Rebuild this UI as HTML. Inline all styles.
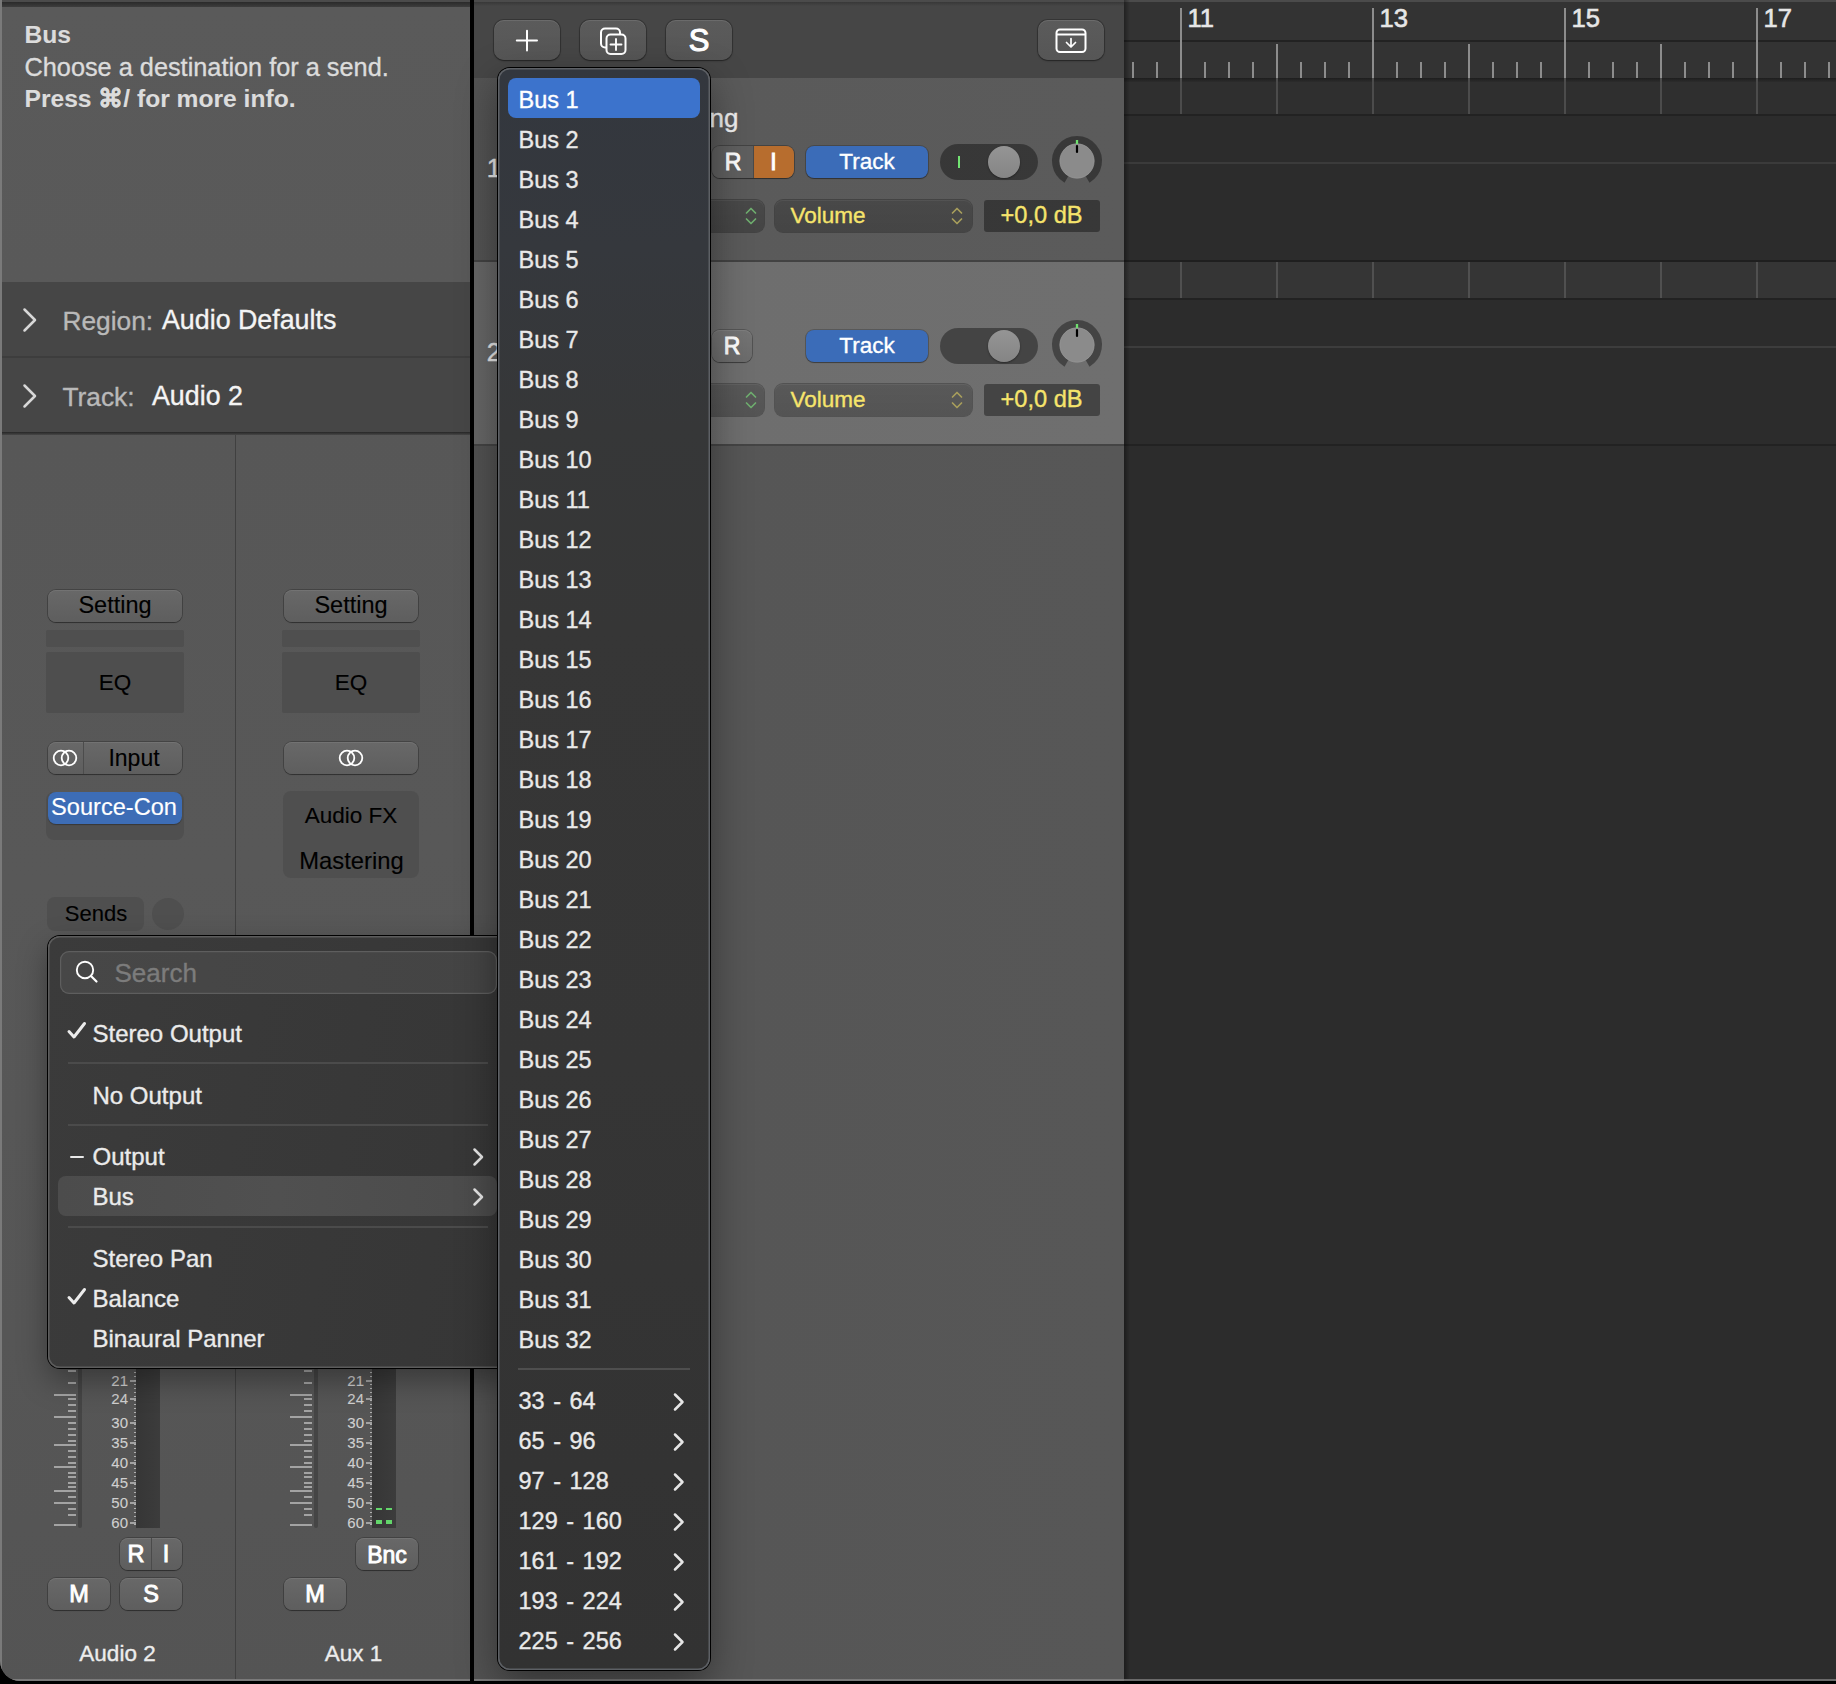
<!DOCTYPE html>
<html><head><meta charset="utf-8">
<style>
*{box-sizing:border-box;margin:0;padding:0}
html,body{width:1836px;height:1684px;overflow:hidden;background:#000;font-family:"Liberation Sans",sans-serif}
.a{position:absolute}
.t{position:absolute;white-space:pre;line-height:1;-webkit-text-stroke:0.35px currentColor}
.btn{position:absolute;border-radius:8px;background:linear-gradient(#686868,#5e5e5e);box-shadow:inset 0 1px 0 rgba(255,255,255,.08),0 0 0 1px rgba(0,0,0,.22),0 1px 1px rgba(0,0,0,.3)}
.tbtn{position:absolute;border-radius:10px;background:linear-gradient(#5b5b5b,#565656);box-shadow:inset 0 1px 0 rgba(255,255,255,.10),0 0 0 1px rgba(0,0,0,.22),0 1px 2px rgba(0,0,0,.35)}
svg{position:absolute;overflow:visible}
</style></head><body>
<div class="a" id="win" style="left:0;top:0;width:1836px;height:1681px;background:#2c2c2c;border-bottom-left-radius:20px;overflow:hidden">

<div class="a" style="left:0;top:0;width:470px;height:1681px;background:#585858;overflow:hidden;border-bottom-left-radius:20px">
<div class="a" style="left:0px;top:0px;width:470px;height:2px;background:#4b4b4b"></div>
<div class="a" style="left:0px;top:2px;width:470px;height:5px;background:linear-gradient(#2a2a2a,#3d3d3d)"></div>
<div class="a" style="left:0px;top:7px;width:470px;height:275px;background:linear-gradient(#5a5a5a,#595959)"></div>
<div class="t" style="left:24.5px;top:23.18px;font-size:24.6px;font-weight:700;color:#dcdcdc;-webkit-text-stroke:0.1px currentColor">Bus</div>
<div class="t" style="left:24.5px;top:54.88px;font-size:25.3px;color:#dcdcdc">Choose a destination for a send.</div>
<div class="t" style="left:24.5px;top:87.48px;font-size:24.6px;font-weight:700;color:#dcdcdc;-webkit-text-stroke:0.1px currentColor">Press ⌘/ for more info.</div>
<div class="a" style="left:0px;top:282px;width:470px;height:74px;background:#464646"></div>
<div class="a" style="left:0px;top:356px;width:470px;height:2px;background:#3d3d3d"></div>
<div class="a" style="left:0px;top:358px;width:470px;height:74px;background:#464646"></div>
<div class="a" style="left:0px;top:432px;width:470px;height:3px;background:linear-gradient(#262626,#474747)"></div>
<svg style="left:0;top:282px" width="60" height="74"><path d="M24.5 27.5 L35 38 L24.5 48.5" fill="none" stroke="#d8d8d8" stroke-width="2.5" stroke-linecap="round" stroke-linejoin="round"/></svg>
<div class="t" style="left:62.5px;top:307.74px;font-size:26.3px;color:#b9b9b9">Region:</div>
<div class="t" style="left:162px;top:307.31px;font-size:26.8px;color:#f4f4f4">Audio Defaults</div>
<svg style="left:0;top:358px" width="60" height="74"><path d="M24.5 27.5 L35 38 L24.5 48.5" fill="none" stroke="#d8d8d8" stroke-width="2.5" stroke-linecap="round" stroke-linejoin="round"/></svg>
<div class="t" style="left:62.5px;top:383.74px;font-size:26.3px;color:#b9b9b9">Track:</div>
<div class="t" style="left:152px;top:383.31px;font-size:26.8px;color:#f4f4f4">Audio 2</div>
<div class="a" style="left:0px;top:435px;width:470px;height:1246px;background:linear-gradient(175deg,#575757,#585858 35%,#565656 70%,#545454)"></div>
<div class="a" style="left:234.5px;top:435px;width:1.2px;height:1246px;background:#404040"></div>
<div class="btn" style="left:48px;top:590px;width:134px;height:32px"></div>
<div class="t" style="left:48.00px;width:134px;text-align:center;top:593.81px;font-size:23.5px;color:#000;-webkit-text-stroke:0.12px #000">Setting</div>
<div class="a" style="left:46px;top:630px;width:138px;height:17px;background:#4f4f4f;border-radius:2px"></div>
<div class="a" style="left:46px;top:652px;width:138px;height:61px;background:#4e4e4e;border-radius:2px"></div>
<div class="t" style="left:48.00px;width:134px;text-align:center;top:671.95px;font-size:22.5px;color:#000;-webkit-text-stroke:0.12px #000">EQ</div>
<div class="btn" style="left:48px;top:742px;width:134px;height:32px"></div>
<div class="a" style="left:83px;top:742px;width:1px;height:32px;background:#4c4c4c"></div>
<svg style="left:50px;top:743px" width="30" height="30"><circle cx="11" cy="15" r="7.3" fill="none" stroke="#fff" stroke-width="1.8"/><circle cx="19" cy="15" r="7.3" fill="none" stroke="#fff" stroke-width="1.8"/></svg>
<div class="t" style="left:84.00px;width:100px;text-align:center;top:746.53px;font-size:23px;color:#000;-webkit-text-stroke:0.12px #000">Input</div>
<div class="a" style="left:46px;top:792px;width:138px;height:48px;background:#4f4f4f;border-radius:8px"></div>
<div class="a" style="left:48px;top:792px;width:134px;height:32px;border-radius:8px;background:#3d6db6;box-shadow:0 1px 1px rgba(0,0,0,.3)"></div>
<div class="t" style="left:47.00px;width:134px;text-align:center;top:795.82px;font-size:23.6px;color:#fff;-webkit-text-stroke:0.15px #fff">Source-Con</div>
<div class="a" style="left:47px;top:897px;width:97px;height:34px;background:#4f4f4f;border-radius:8px"></div>
<div class="t" style="left:47.50px;width:97px;text-align:center;top:902.98px;font-size:22px;color:#000;-webkit-text-stroke:0.12px #000">Sends</div>
<div class="a" style="left:152px;top:898px;width:32px;height:32px;border-radius:50%;background:#4f4f4f"></div>
<div class="a" style="left:54px;top:1394.25px;width:22px;height:1.6px;background:#a3a3a3"></div>
<div class="a" style="left:54px;top:1416.25px;width:22px;height:1.6px;background:#a3a3a3"></div>
<div class="a" style="left:54px;top:1444.25px;width:22px;height:1.6px;background:#a3a3a3"></div>
<div class="a" style="left:54px;top:1466.25px;width:22px;height:1.6px;background:#a3a3a3"></div>
<div class="a" style="left:54px;top:1490.25px;width:22px;height:1.6px;background:#a3a3a3"></div>
<div class="a" style="left:54px;top:1502.25px;width:22px;height:1.6px;background:#a3a3a3"></div>
<div class="a" style="left:54px;top:1524.25px;width:22px;height:1.6px;background:#a3a3a3"></div>
<div class="a" style="left:68px;top:1370.25px;width:8px;height:1.6px;background:#a3a3a3"></div>
<div class="a" style="left:68px;top:1382.25px;width:8px;height:1.6px;background:#a3a3a3"></div>
<div class="a" style="left:68px;top:1398.25px;width:8px;height:1.6px;background:#a3a3a3"></div>
<div class="a" style="left:68px;top:1404.25px;width:8px;height:1.6px;background:#a3a3a3"></div>
<div class="a" style="left:68px;top:1410.25px;width:8px;height:1.6px;background:#a3a3a3"></div>
<div class="a" style="left:68px;top:1422.25px;width:8px;height:1.6px;background:#a3a3a3"></div>
<div class="a" style="left:68px;top:1428.25px;width:8px;height:1.6px;background:#a3a3a3"></div>
<div class="a" style="left:68px;top:1434.25px;width:8px;height:1.6px;background:#a3a3a3"></div>
<div class="a" style="left:68px;top:1440.25px;width:8px;height:1.6px;background:#a3a3a3"></div>
<div class="a" style="left:68px;top:1450.25px;width:8px;height:1.6px;background:#a3a3a3"></div>
<div class="a" style="left:68px;top:1456.25px;width:8px;height:1.6px;background:#a3a3a3"></div>
<div class="a" style="left:68px;top:1462.25px;width:8px;height:1.6px;background:#a3a3a3"></div>
<div class="a" style="left:68px;top:1472.25px;width:8px;height:1.6px;background:#a3a3a3"></div>
<div class="a" style="left:68px;top:1476.25px;width:8px;height:1.6px;background:#a3a3a3"></div>
<div class="a" style="left:68px;top:1482.25px;width:8px;height:1.6px;background:#a3a3a3"></div>
<div class="a" style="left:68px;top:1486.25px;width:8px;height:1.6px;background:#a3a3a3"></div>
<div class="a" style="left:68px;top:1496.25px;width:8px;height:1.6px;background:#a3a3a3"></div>
<div class="a" style="left:68px;top:1508.25px;width:8px;height:1.6px;background:#a3a3a3"></div>
<div class="a" style="left:68px;top:1514.25px;width:8px;height:1.6px;background:#a3a3a3"></div>
<div class="a" style="left:78px;top:1368px;width:4px;height:160px;background:#454545;border-radius:2px"></div>
<div class="t" style="left:88.00px;width:40px;text-align:right;top:1372.70px;font-size:15px;color:#d0d0d0;-webkit-text-stroke:0.1px currentColor">21</div>
<div class="a" style="left:130px;top:1380.25px;width:6px;height:1.6px;background:#a3a3a3"></div>
<div class="t" style="left:88.00px;width:40px;text-align:right;top:1390.70px;font-size:15px;color:#d0d0d0;-webkit-text-stroke:0.1px currentColor">24</div>
<div class="a" style="left:130px;top:1398.25px;width:6px;height:1.6px;background:#a3a3a3"></div>
<div class="t" style="left:88.00px;width:40px;text-align:right;top:1414.70px;font-size:15px;color:#d0d0d0;-webkit-text-stroke:0.1px currentColor">30</div>
<div class="a" style="left:130px;top:1422.25px;width:6px;height:1.6px;background:#a3a3a3"></div>
<div class="t" style="left:88.00px;width:40px;text-align:right;top:1434.70px;font-size:15px;color:#d0d0d0;-webkit-text-stroke:0.1px currentColor">35</div>
<div class="a" style="left:130px;top:1442.25px;width:6px;height:1.6px;background:#a3a3a3"></div>
<div class="t" style="left:88.00px;width:40px;text-align:right;top:1454.70px;font-size:15px;color:#d0d0d0;-webkit-text-stroke:0.1px currentColor">40</div>
<div class="a" style="left:130px;top:1462.25px;width:6px;height:1.6px;background:#a3a3a3"></div>
<div class="t" style="left:88.00px;width:40px;text-align:right;top:1474.70px;font-size:15px;color:#d0d0d0;-webkit-text-stroke:0.1px currentColor">45</div>
<div class="a" style="left:130px;top:1482.25px;width:6px;height:1.6px;background:#a3a3a3"></div>
<div class="t" style="left:88.00px;width:40px;text-align:right;top:1494.70px;font-size:15px;color:#d0d0d0;-webkit-text-stroke:0.1px currentColor">50</div>
<div class="a" style="left:130px;top:1502.25px;width:6px;height:1.6px;background:#a3a3a3"></div>
<div class="t" style="left:88.00px;width:40px;text-align:right;top:1514.70px;font-size:15px;color:#d0d0d0;-webkit-text-stroke:0.1px currentColor">60</div>
<div class="a" style="left:130px;top:1522.25px;width:6px;height:1.6px;background:#a3a3a3"></div>
<div class="a" style="left:134.3px;top:1368px;width:1.5px;height:160px;background:repeating-linear-gradient(#b0b0b0 0 1.5px,transparent 1.5px 4px)"></div>
<div class="a" style="left:136px;top:1368px;width:24px;height:160px;background:linear-gradient(90deg,#363636,#3a3a3a 70%,#3c3c3c)"></div>
<div class="btn" style="left:120px;top:1538px;width:62px;height:32px"></div>
<div class="a" style="left:151px;top:1538px;width:1px;height:32px;background:#4a4a4a"></div>
<div class="t" style="left:121.00px;width:30px;text-align:center;top:1543.11px;font-size:23.5px;color:#fff;-webkit-text-stroke:0.9px #fff">R</div>
<div class="t" style="left:151.00px;width:30px;text-align:center;top:1543.11px;font-size:23.5px;color:#fff;-webkit-text-stroke:0.9px #fff">I</div>
<div class="btn" style="left:48px;top:1578px;width:62px;height:32px"></div>
<div class="t" style="left:49.00px;width:60px;text-align:center;top:1583.11px;font-size:23.5px;color:#fff;-webkit-text-stroke:0.9px #fff">M</div>
<div class="btn" style="left:120px;top:1578px;width:62px;height:32px"></div>
<div class="t" style="left:121.00px;width:60px;text-align:center;top:1583.11px;font-size:23.5px;color:#fff;-webkit-text-stroke:0.9px #fff">S</div>
<div class="t" style="left:37.50px;width:160px;text-align:center;top:1643.35px;font-size:22.5px;color:#ececec">Audio 2</div>
<div class="btn" style="left:284px;top:590px;width:134px;height:32px"></div>
<div class="t" style="left:284.00px;width:134px;text-align:center;top:593.81px;font-size:23.5px;color:#000;-webkit-text-stroke:0.12px #000">Setting</div>
<div class="a" style="left:282px;top:630px;width:138px;height:17px;background:#4f4f4f;border-radius:2px"></div>
<div class="a" style="left:282px;top:652px;width:138px;height:61px;background:#4e4e4e;border-radius:2px"></div>
<div class="t" style="left:284.00px;width:134px;text-align:center;top:671.95px;font-size:22.5px;color:#000;-webkit-text-stroke:0.12px #000">EQ</div>
<div class="btn" style="left:284px;top:742px;width:134px;height:32px"></div>
<svg style="left:336px;top:743px" width="30" height="30"><circle cx="11" cy="15" r="7.3" fill="none" stroke="#fff" stroke-width="1.8"/><circle cx="19" cy="15" r="7.3" fill="none" stroke="#fff" stroke-width="1.8"/></svg>
<div class="a" style="left:283px;top:791px;width:136px;height:87px;background:#4f4f4f;border-radius:8px"></div>
<div class="t" style="left:283.00px;width:136px;text-align:center;top:804.95px;font-size:22.5px;color:#000;-webkit-text-stroke:0.12px #000">Audio FX</div>
<div class="t" style="left:283.50px;width:136px;text-align:center;top:848.85px;font-size:23.8px;color:#000;-webkit-text-stroke:0.12px #000">Mastering</div>
<div class="a" style="left:290px;top:1394.25px;width:22px;height:1.6px;background:#a3a3a3"></div>
<div class="a" style="left:290px;top:1416.25px;width:22px;height:1.6px;background:#a3a3a3"></div>
<div class="a" style="left:290px;top:1444.25px;width:22px;height:1.6px;background:#a3a3a3"></div>
<div class="a" style="left:290px;top:1466.25px;width:22px;height:1.6px;background:#a3a3a3"></div>
<div class="a" style="left:290px;top:1490.25px;width:22px;height:1.6px;background:#a3a3a3"></div>
<div class="a" style="left:290px;top:1502.25px;width:22px;height:1.6px;background:#a3a3a3"></div>
<div class="a" style="left:290px;top:1524.25px;width:22px;height:1.6px;background:#a3a3a3"></div>
<div class="a" style="left:304px;top:1370.25px;width:8px;height:1.6px;background:#a3a3a3"></div>
<div class="a" style="left:304px;top:1382.25px;width:8px;height:1.6px;background:#a3a3a3"></div>
<div class="a" style="left:304px;top:1398.25px;width:8px;height:1.6px;background:#a3a3a3"></div>
<div class="a" style="left:304px;top:1404.25px;width:8px;height:1.6px;background:#a3a3a3"></div>
<div class="a" style="left:304px;top:1410.25px;width:8px;height:1.6px;background:#a3a3a3"></div>
<div class="a" style="left:304px;top:1422.25px;width:8px;height:1.6px;background:#a3a3a3"></div>
<div class="a" style="left:304px;top:1428.25px;width:8px;height:1.6px;background:#a3a3a3"></div>
<div class="a" style="left:304px;top:1434.25px;width:8px;height:1.6px;background:#a3a3a3"></div>
<div class="a" style="left:304px;top:1440.25px;width:8px;height:1.6px;background:#a3a3a3"></div>
<div class="a" style="left:304px;top:1450.25px;width:8px;height:1.6px;background:#a3a3a3"></div>
<div class="a" style="left:304px;top:1456.25px;width:8px;height:1.6px;background:#a3a3a3"></div>
<div class="a" style="left:304px;top:1462.25px;width:8px;height:1.6px;background:#a3a3a3"></div>
<div class="a" style="left:304px;top:1472.25px;width:8px;height:1.6px;background:#a3a3a3"></div>
<div class="a" style="left:304px;top:1476.25px;width:8px;height:1.6px;background:#a3a3a3"></div>
<div class="a" style="left:304px;top:1482.25px;width:8px;height:1.6px;background:#a3a3a3"></div>
<div class="a" style="left:304px;top:1486.25px;width:8px;height:1.6px;background:#a3a3a3"></div>
<div class="a" style="left:304px;top:1496.25px;width:8px;height:1.6px;background:#a3a3a3"></div>
<div class="a" style="left:304px;top:1508.25px;width:8px;height:1.6px;background:#a3a3a3"></div>
<div class="a" style="left:304px;top:1514.25px;width:8px;height:1.6px;background:#a3a3a3"></div>
<div class="a" style="left:314px;top:1368px;width:4px;height:160px;background:#454545;border-radius:2px"></div>
<div class="t" style="left:324.00px;width:40px;text-align:right;top:1372.70px;font-size:15px;color:#d0d0d0;-webkit-text-stroke:0.1px currentColor">21</div>
<div class="a" style="left:366px;top:1380.25px;width:6px;height:1.6px;background:#a3a3a3"></div>
<div class="t" style="left:324.00px;width:40px;text-align:right;top:1390.70px;font-size:15px;color:#d0d0d0;-webkit-text-stroke:0.1px currentColor">24</div>
<div class="a" style="left:366px;top:1398.25px;width:6px;height:1.6px;background:#a3a3a3"></div>
<div class="t" style="left:324.00px;width:40px;text-align:right;top:1414.70px;font-size:15px;color:#d0d0d0;-webkit-text-stroke:0.1px currentColor">30</div>
<div class="a" style="left:366px;top:1422.25px;width:6px;height:1.6px;background:#a3a3a3"></div>
<div class="t" style="left:324.00px;width:40px;text-align:right;top:1434.70px;font-size:15px;color:#d0d0d0;-webkit-text-stroke:0.1px currentColor">35</div>
<div class="a" style="left:366px;top:1442.25px;width:6px;height:1.6px;background:#a3a3a3"></div>
<div class="t" style="left:324.00px;width:40px;text-align:right;top:1454.70px;font-size:15px;color:#d0d0d0;-webkit-text-stroke:0.1px currentColor">40</div>
<div class="a" style="left:366px;top:1462.25px;width:6px;height:1.6px;background:#a3a3a3"></div>
<div class="t" style="left:324.00px;width:40px;text-align:right;top:1474.70px;font-size:15px;color:#d0d0d0;-webkit-text-stroke:0.1px currentColor">45</div>
<div class="a" style="left:366px;top:1482.25px;width:6px;height:1.6px;background:#a3a3a3"></div>
<div class="t" style="left:324.00px;width:40px;text-align:right;top:1494.70px;font-size:15px;color:#d0d0d0;-webkit-text-stroke:0.1px currentColor">50</div>
<div class="a" style="left:366px;top:1502.25px;width:6px;height:1.6px;background:#a3a3a3"></div>
<div class="t" style="left:324.00px;width:40px;text-align:right;top:1514.70px;font-size:15px;color:#d0d0d0;-webkit-text-stroke:0.1px currentColor">60</div>
<div class="a" style="left:366px;top:1522.25px;width:6px;height:1.6px;background:#a3a3a3"></div>
<div class="a" style="left:370.3px;top:1368px;width:1.5px;height:160px;background:repeating-linear-gradient(#b0b0b0 0 1.5px,transparent 1.5px 4px)"></div>
<div class="a" style="left:372px;top:1368px;width:24px;height:160px;background:linear-gradient(90deg,#363636,#3a3a3a 70%,#3c3c3c)"></div>
<div class="a" style="left:376px;top:1508px;width:6px;height:2px;background:#63d66b"></div>
<div class="a" style="left:376px;top:1520px;width:6px;height:4px;background:#63d66b"></div>
<div class="a" style="left:386px;top:1508px;width:6px;height:2px;background:#63d66b"></div>
<div class="a" style="left:386px;top:1520px;width:6px;height:4px;background:#63d66b"></div>
<div class="btn" style="left:356px;top:1538px;width:62px;height:32px"></div>
<div class="t" style="left:356.00px;width:62px;text-align:center;top:1543.53px;font-size:23px;color:#fff;-webkit-text-stroke:0.9px #fff">Bnc</div>
<div class="btn" style="left:284px;top:1578px;width:62px;height:32px"></div>
<div class="t" style="left:285.00px;width:60px;text-align:center;top:1583.11px;font-size:23.5px;color:#fff;-webkit-text-stroke:0.9px #fff">M</div>
<div class="t" style="left:273.50px;width:160px;text-align:center;top:1643.35px;font-size:22.5px;color:#ececec">Aux 1</div>
<div class="a" style="left:0px;top:0px;width:2px;height:1681px;background:#7a7a7a"></div>
<div class="a" style="left:0px;top:1679px;width:470px;height:2px;background:#7a7a7a"></div>
</div>
<div class="a" style="left:470px;top:0px;width:4px;height:1684px;background:#000"></div>
<div class="a" style="left:474px;top:0;width:650px;height:1681px;background:#585858;overflow:hidden">
<div class="a" style="left:0px;top:0px;width:650px;height:2px;background:#4b4b4b"></div>
<div class="a" style="left:0px;top:2px;width:650px;height:76px;background:linear-gradient(#383838,#464646 4px,#464646)"></div>
<div class="a" style="left:0px;top:78px;width:650px;height:182px;background:linear-gradient(90deg,#535353,#5a5a5a 40%,#5b5b5b)"></div>
<div class="a" style="left:0px;top:260px;width:650px;height:2px;background:#424242"></div>
<div class="a" style="left:0px;top:262px;width:650px;height:182px;background:linear-gradient(90deg,#666,#6e6e6e 40%,#6f6f6f)"></div>
<div class="a" style="left:0px;top:444px;width:650px;height:2px;background:#444"></div>
<div class="a" style="left:0px;top:446px;width:650px;height:1235px;background:linear-gradient(90deg,#525252,#565656 40%,#575757)"></div>
<div class="a" style="left:0px;top:1679px;width:650px;height:2px;background:#7a7a7a"></div>
</div>
<div class="tbtn" style="left:494px;top:20px;width:66px;height:40px"></div>
<div class="tbtn" style="left:580px;top:20px;width:66px;height:40px"></div>
<div class="tbtn" style="left:666px;top:20px;width:66px;height:40px"></div>
<div class="tbtn" style="left:1038px;top:20px;width:66px;height:40px"></div>
<svg style="left:516px;top:30px" width="22" height="22"><path d="M11 0.8V20.5M0.8 10.5H21" stroke="#fff" stroke-width="2" stroke-linecap="round"/></svg>
<svg style="left:598px;top:27px" width="32" height="28"><rect x="3" y="1.5" width="19" height="19" rx="4" fill="none" stroke="#fff" stroke-width="2"/><rect x="8.5" y="7.5" width="19" height="19.5" rx="4" fill="#585858" stroke="#fff" stroke-width="2"/><path d="M18 12V23M12.5 17.5H23.5" stroke="#fff" stroke-width="1.9" stroke-linecap="round"/></svg>
<div class="t" style="left:679.00px;width:40px;text-align:center;top:25.06px;font-size:31px;color:#fff;-webkit-text-stroke:1.1px #fff">S</div>
<svg style="left:1055px;top:28px" width="32" height="26"><rect x="1.5" y="1.5" width="29" height="22.5" rx="3.5" fill="none" stroke="#fff" stroke-width="2"/><path d="M2 6.5H30" stroke="#fff" stroke-width="2"/><path d="M16 10.5V18.5M11.5 14.5L16 19L20.5 14.5" fill="none" stroke="#fff" stroke-width="1.7" stroke-linecap="round" stroke-linejoin="round"/></svg>
<div class="t" style="left:461.00px;width:40px;text-align:right;top:156.11px;font-size:25.5px;color:#e8e8e8">1</div>
<div class="t" style="left:538.50px;width:200px;text-align:right;top:104.99px;font-size:26px;color:#f0f0f0">Recording</div>
<div class="a" style="left:712px;top:146px;width:82px;height:32px;border-radius:8px;overflow:hidden;box-shadow:0 0 0 1px rgba(0,0,0,.25),0 1px 1px rgba(0,0,0,.3)"><div class="a" style="left:0;top:0;width:41px;height:32px;background:#5f5f5f"></div><div class="a" style="left:41px;top:0;width:1px;height:32px;background:#4a4a4a"></div><div class="a" style="left:42px;top:0;width:40px;height:32px;background:#b76d2e"></div></div>
<div class="t" style="left:713.00px;width:40px;text-align:center;top:150.53px;font-size:23px;color:#fff;-webkit-text-stroke:0.9px #fff">R</div>
<div class="t" style="left:753.50px;width:40px;text-align:center;top:150.53px;font-size:23px;color:#fff;-webkit-text-stroke:0.9px #fff">I</div>
<div class="a" style="left:806px;top:146px;width:122px;height:32px;border-radius:8px;background:#3b6cb8;box-shadow:0 0 0 1px rgba(0,0,0,.2),0 1px 1px rgba(0,0,0,.3)"></div>
<div class="t" style="left:806.00px;width:122px;text-align:center;top:150.65px;font-size:22.5px;color:#fff">Track</div>
<div class="a" style="left:940px;top:144px;width:98px;height:36px;border-radius:18px;background:rgba(0,0,0,.38)"></div>
<div class="a" style="left:988px;top:146px;width:32px;height:32px;border-radius:50%;background:linear-gradient(#959595,#858585);box-shadow:0 1px 2px rgba(0,0,0,.4)"></div>
<div class="a" style="left:958px;top:156px;width:2.2px;height:12px;background:#72e472"></div>
<svg style="left:1047px;top:130px" width="60" height="60"><path d="M 19.45 49.27 A 21.1 21.1 0 1 1 40.55 49.27" fill="none" stroke="rgba(0,0,0,.38)" stroke-width="7.8" /><circle cx="30" cy="31" r="17.2" fill="#8b8b8b" stroke="#9a9a9a" stroke-width="0.6"/><path d="M30 16V22" stroke="#000" stroke-width="2.2" stroke-linecap="round"/><path d="M30 10V14" stroke="#6ee06e" stroke-width="2.3"/></svg>
<div class="a" style="left:640px;top:200px;width:124px;height:32px;border-radius:8px;background:linear-gradient(rgba(0,0,0,.2),rgba(0,0,0,.24));box-shadow:inset 0 1px 0 rgba(255,255,255,.06),0 0 0 1px rgba(0,0,0,.25)"></div>
<svg style="left:744px;top:206px" width="14" height="22"><path d="M2.5 7L7 2.5L11.5 7M2.5 13L7 17.5L11.5 13" fill="none" stroke="#6fae6f" stroke-width="1.7" stroke-linecap="round" stroke-linejoin="round"/></svg>
<div class="a" style="left:775px;top:200px;width:197px;height:32px;border-radius:8px;background:linear-gradient(rgba(0,0,0,.2),rgba(0,0,0,.24));box-shadow:inset 0 1px 0 rgba(255,255,255,.06),0 0 0 1px rgba(0,0,0,.25)"></div>
<div class="t" style="left:790.5px;top:204.55px;font-size:22.5px;color:#f6e46c">Volume</div>
<svg style="left:950px;top:206px" width="14" height="22"><path d="M2.5 7L7 2.5L11.5 7M2.5 13L7 17.5L11.5 13" fill="none" stroke="#a89e5c" stroke-width="1.7" stroke-linecap="round" stroke-linejoin="round"/></svg>
<div class="a" style="left:984px;top:200px;width:116px;height:32px;background:rgba(0,0,0,.38);border-radius:3px"></div>
<div class="t" style="left:983.50px;width:116px;text-align:center;top:204.02px;font-size:23.6px;color:#f6e46c">+0,0 dB</div>
<div class="t" style="left:461.00px;width:40px;text-align:right;top:340.11px;font-size:25.5px;color:#e8e8e8">2</div>
<div class="t" style="left:538.50px;width:200px;text-align:right;top:288.99px;font-size:26px;color:#f0f0f0"></div>
<div class="btn" style="left:712px;top:330px;width:40px;height:32px;background:linear-gradient(#747474,#6b6b6b)"></div>
<div class="t" style="left:712.00px;width:40px;text-align:center;top:334.53px;font-size:23px;color:#fff;-webkit-text-stroke:0.9px #fff">R</div>
<div class="a" style="left:806px;top:330px;width:122px;height:32px;border-radius:8px;background:#3b6cb8;box-shadow:0 0 0 1px rgba(0,0,0,.2),0 1px 1px rgba(0,0,0,.3)"></div>
<div class="t" style="left:806.00px;width:122px;text-align:center;top:334.65px;font-size:22.5px;color:#fff">Track</div>
<div class="a" style="left:940px;top:328px;width:98px;height:36px;border-radius:18px;background:rgba(0,0,0,.38)"></div>
<div class="a" style="left:988px;top:330px;width:32px;height:32px;border-radius:50%;background:linear-gradient(#959595,#858585);box-shadow:0 1px 2px rgba(0,0,0,.4)"></div>
<svg style="left:1047px;top:314px" width="60" height="60"><path d="M 19.45 49.27 A 21.1 21.1 0 1 1 40.55 49.27" fill="none" stroke="rgba(0,0,0,.38)" stroke-width="7.8" /><circle cx="30" cy="31" r="17.2" fill="#8b8b8b" stroke="#9a9a9a" stroke-width="0.6"/><path d="M30 16V22" stroke="#000" stroke-width="2.2" stroke-linecap="round"/><path d="M30 10V14" stroke="#6ee06e" stroke-width="2.3"/></svg>
<div class="a" style="left:640px;top:384px;width:124px;height:32px;border-radius:8px;background:linear-gradient(rgba(0,0,0,.2),rgba(0,0,0,.24));box-shadow:inset 0 1px 0 rgba(255,255,255,.06),0 0 0 1px rgba(0,0,0,.25)"></div>
<svg style="left:744px;top:390px" width="14" height="22"><path d="M2.5 7L7 2.5L11.5 7M2.5 13L7 17.5L11.5 13" fill="none" stroke="#6fae6f" stroke-width="1.7" stroke-linecap="round" stroke-linejoin="round"/></svg>
<div class="a" style="left:775px;top:384px;width:197px;height:32px;border-radius:8px;background:linear-gradient(rgba(0,0,0,.2),rgba(0,0,0,.24));box-shadow:inset 0 1px 0 rgba(255,255,255,.06),0 0 0 1px rgba(0,0,0,.25)"></div>
<div class="t" style="left:790.5px;top:388.55px;font-size:22.5px;color:#f6e46c">Volume</div>
<svg style="left:950px;top:390px" width="14" height="22"><path d="M2.5 7L7 2.5L11.5 7M2.5 13L7 17.5L11.5 13" fill="none" stroke="#a89e5c" stroke-width="1.7" stroke-linecap="round" stroke-linejoin="round"/></svg>
<div class="a" style="left:984px;top:384px;width:116px;height:32px;background:rgba(0,0,0,.38);border-radius:3px"></div>
<div class="t" style="left:983.50px;width:116px;text-align:center;top:388.02px;font-size:23.6px;color:#f6e46c">+0,0 dB</div>
<div class="a" style="left:1124px;top:0;width:712px;height:1681px;background:#2c2c2c;overflow:hidden">
<div class="a" style="left:0px;top:0px;width:712px;height:2px;background:#4b4b4b"></div>
<div class="a" style="left:0px;top:2px;width:712px;height:76px;background:#333"></div>
<div class="a" style="left:0px;top:40px;width:712px;height:2px;background:#222"></div>
<div class="a" style="left:56.2px;top:8px;width:1.6px;height:70px;background:#8c8c8c"></div>
<div class="t" style="left:63.5px;top:6.33px;font-size:25.6px;color:#e6e6e6;-webkit-text-stroke:0.6px currentColor">11</div>
<div class="a" style="left:248.2px;top:8px;width:1.6px;height:70px;background:#8c8c8c"></div>
<div class="t" style="left:255.5px;top:6.33px;font-size:25.6px;color:#e6e6e6;-webkit-text-stroke:0.6px currentColor">13</div>
<div class="a" style="left:440.2px;top:8px;width:1.6px;height:70px;background:#8c8c8c"></div>
<div class="t" style="left:447.5px;top:6.33px;font-size:25.6px;color:#e6e6e6;-webkit-text-stroke:0.6px currentColor">15</div>
<div class="a" style="left:632.2px;top:8px;width:1.6px;height:70px;background:#8c8c8c"></div>
<div class="t" style="left:639.5px;top:6.33px;font-size:25.6px;color:#e6e6e6;-webkit-text-stroke:0.6px currentColor">17</div>
<div class="a" style="left:152.2px;top:44px;width:1.6px;height:34px;background:#8c8c8c"></div>
<div class="a" style="left:344.2px;top:44px;width:1.6px;height:34px;background:#8c8c8c"></div>
<div class="a" style="left:536.2px;top:44px;width:1.6px;height:34px;background:#8c8c8c"></div>
<div class="a" style="left:728.2px;top:44px;width:1.6px;height:34px;background:#8c8c8c"></div>
<div class="a" style="left:8.2px;top:62px;width:1.6px;height:16px;background:#8c8c8c"></div>
<div class="a" style="left:32.2px;top:62px;width:1.6px;height:16px;background:#8c8c8c"></div>
<div class="a" style="left:80.2px;top:62px;width:1.6px;height:16px;background:#8c8c8c"></div>
<div class="a" style="left:104.2px;top:62px;width:1.6px;height:16px;background:#8c8c8c"></div>
<div class="a" style="left:128.2px;top:62px;width:1.6px;height:16px;background:#8c8c8c"></div>
<div class="a" style="left:176.2px;top:62px;width:1.6px;height:16px;background:#8c8c8c"></div>
<div class="a" style="left:200.2px;top:62px;width:1.6px;height:16px;background:#8c8c8c"></div>
<div class="a" style="left:224.2px;top:62px;width:1.6px;height:16px;background:#8c8c8c"></div>
<div class="a" style="left:272.2px;top:62px;width:1.6px;height:16px;background:#8c8c8c"></div>
<div class="a" style="left:296.2px;top:62px;width:1.6px;height:16px;background:#8c8c8c"></div>
<div class="a" style="left:320.2px;top:62px;width:1.6px;height:16px;background:#8c8c8c"></div>
<div class="a" style="left:368.2px;top:62px;width:1.6px;height:16px;background:#8c8c8c"></div>
<div class="a" style="left:392.2px;top:62px;width:1.6px;height:16px;background:#8c8c8c"></div>
<div class="a" style="left:416.2px;top:62px;width:1.6px;height:16px;background:#8c8c8c"></div>
<div class="a" style="left:464.2px;top:62px;width:1.6px;height:16px;background:#8c8c8c"></div>
<div class="a" style="left:488.2px;top:62px;width:1.6px;height:16px;background:#8c8c8c"></div>
<div class="a" style="left:512.2px;top:62px;width:1.6px;height:16px;background:#8c8c8c"></div>
<div class="a" style="left:560.2px;top:62px;width:1.6px;height:16px;background:#8c8c8c"></div>
<div class="a" style="left:584.2px;top:62px;width:1.6px;height:16px;background:#8c8c8c"></div>
<div class="a" style="left:608.2px;top:62px;width:1.6px;height:16px;background:#8c8c8c"></div>
<div class="a" style="left:656.2px;top:62px;width:1.6px;height:16px;background:#8c8c8c"></div>
<div class="a" style="left:680.2px;top:62px;width:1.6px;height:16px;background:#8c8c8c"></div>
<div class="a" style="left:704.2px;top:62px;width:1.6px;height:16px;background:#8c8c8c"></div>
<div class="a" style="left:752.2px;top:62px;width:1.6px;height:16px;background:#8c8c8c"></div>
<div class="a" style="left:776.2px;top:62px;width:1.6px;height:16px;background:#8c8c8c"></div>
<div class="a" style="left:800.2px;top:62px;width:1.6px;height:16px;background:#8c8c8c"></div>
<div class="a" style="left:848.2px;top:62px;width:1.6px;height:16px;background:#8c8c8c"></div>
<div class="a" style="left:872.2px;top:62px;width:1.6px;height:16px;background:#8c8c8c"></div>
<div class="a" style="left:896.2px;top:62px;width:1.6px;height:16px;background:#8c8c8c"></div>
<div class="a" style="left:944.2px;top:62px;width:1.6px;height:16px;background:#8c8c8c"></div>
<div class="a" style="left:0px;top:78px;width:712px;height:4px;background:linear-gradient(#1e1e1e,rgba(30,30,30,0))"></div>
<div class="a" style="left:0px;top:82px;width:712px;height:32px;background:#2f2f2f"></div>
<div class="a" style="left:0px;top:114px;width:712px;height:2px;background:#222"></div>
<div class="a" style="left:0px;top:162px;width:712px;height:2px;background:#3b3b3b"></div>
<div class="a" style="left:0px;top:260px;width:712px;height:2px;background:#1f1f1f"></div>
<div class="a" style="left:0px;top:262px;width:712px;height:36px;background:#353535"></div>
<div class="a" style="left:0px;top:298px;width:712px;height:2px;background:#222"></div>
<div class="a" style="left:0px;top:346px;width:712px;height:2px;background:#3d3d3d"></div>
<div class="a" style="left:0px;top:444px;width:712px;height:2px;background:#222"></div>
<div class="a" style="left:56.4px;top:78px;width:1.2px;height:36px;background:#4c4c4c"></div>
<div class="a" style="left:56.4px;top:262px;width:1.2px;height:36px;background:#505050"></div>
<div class="a" style="left:152.4px;top:78px;width:1.2px;height:36px;background:#4c4c4c"></div>
<div class="a" style="left:152.4px;top:262px;width:1.2px;height:36px;background:#505050"></div>
<div class="a" style="left:248.4px;top:78px;width:1.2px;height:36px;background:#4c4c4c"></div>
<div class="a" style="left:248.4px;top:262px;width:1.2px;height:36px;background:#505050"></div>
<div class="a" style="left:344.4px;top:78px;width:1.2px;height:36px;background:#4c4c4c"></div>
<div class="a" style="left:344.4px;top:262px;width:1.2px;height:36px;background:#505050"></div>
<div class="a" style="left:440.4px;top:78px;width:1.2px;height:36px;background:#4c4c4c"></div>
<div class="a" style="left:440.4px;top:262px;width:1.2px;height:36px;background:#505050"></div>
<div class="a" style="left:536.4px;top:78px;width:1.2px;height:36px;background:#4c4c4c"></div>
<div class="a" style="left:536.4px;top:262px;width:1.2px;height:36px;background:#505050"></div>
<div class="a" style="left:632.4px;top:78px;width:1.2px;height:36px;background:#4c4c4c"></div>
<div class="a" style="left:632.4px;top:262px;width:1.2px;height:36px;background:#505050"></div>
<div class="a" style="left:728.4px;top:78px;width:1.2px;height:36px;background:#4c4c4c"></div>
<div class="a" style="left:728.4px;top:262px;width:1.2px;height:36px;background:#505050"></div>
<div class="a" style="left:0px;top:0px;width:6px;height:1681px;background:linear-gradient(90deg,rgba(0,0,0,.35),rgba(0,0,0,0))"></div>
<div class="a" style="left:0px;top:1679px;width:712px;height:2px;background:#6a6a6a"></div>
</div>
<div class="a" style="left:48px;top:936px;width:470px;height:432px;border-radius:12px;background:linear-gradient(100deg,#3b3b3b,#363636);box-shadow:0 0 0 1px #000,inset 0 0 0 1.5px #5c5c5c,0 12px 30px rgba(0,0,0,.35);overflow:hidden">
</div>
<div class="a" style="left:60px;top:951px;width:437px;height:43px;border-radius:9px;background:linear-gradient(90deg,#474747,#444);box-shadow:inset 0 0 0 1.2px #5e5e5e"></div>
<svg style="left:74px;top:959px" width="26" height="26"><circle cx="11" cy="11" r="8.2" fill="none" stroke="#fff" stroke-width="1.9"/><path d="M17 17L22.5 22.5" stroke="#fff" stroke-width="2.2" stroke-linecap="round"/></svg>
<div class="t" style="left:114.5px;top:959.99px;font-size:26px;color:#7c7c7c">Search</div>
<svg style="left:66px;top:1020px" width="22" height="22"><path d="M3 11.5L8 17L18.5 3.5" fill="none" stroke="#ececec" stroke-width="3" stroke-linecap="round" stroke-linejoin="round"/></svg>
<div class="t" style="left:92.5px;top:1021.88px;font-size:24px;color:#ebebeb">Stereo Output</div>
<div class="a" style="left:68px;top:1062px;width:420px;height:2px;background:#4b4b4b"></div>
<div class="t" style="left:92.5px;top:1083.58px;font-size:24px;color:#ebebeb">No Output</div>
<div class="a" style="left:68px;top:1124px;width:420px;height:2px;background:#4b4b4b"></div>
<div class="a" style="left:70px;top:1156px;width:14px;height:2.2px;background:#e8e8e8;border-radius:1px"></div>
<div class="t" style="left:92.5px;top:1145.48px;font-size:24px;color:#ebebeb">Output</div>
<div class="a" style="left:58px;top:1176px;width:439px;height:40px;border-radius:8px;background:linear-gradient(90deg,#4c4c4c,#505050 50%,#4b4b4b)"></div>
<div class="t" style="left:92.5px;top:1185.28px;font-size:24px;color:#ebebeb">Bus</div>
<svg style="left:471px;top:1147px" width="16" height="20"><path d="M3.5 2.5L11 10L3.5 17.5" fill="none" stroke="#e6e6e6" stroke-width="2.5" stroke-linecap="round" stroke-linejoin="round"/></svg>
<svg style="left:471px;top:1187px" width="16" height="20"><path d="M3.5 2.5L11 10L3.5 17.5" fill="none" stroke="#e6e6e6" stroke-width="2.5" stroke-linecap="round" stroke-linejoin="round"/></svg>
<div class="a" style="left:68px;top:1226px;width:420px;height:2px;background:#4b4b4b"></div>
<div class="t" style="left:92.5px;top:1246.68px;font-size:24px;color:#ebebeb">Stereo Pan</div>
<svg style="left:66px;top:1286px" width="22" height="22"><path d="M3 11.5L8 17L18.5 3.5" fill="none" stroke="#ececec" stroke-width="3" stroke-linecap="round" stroke-linejoin="round"/></svg>
<div class="t" style="left:92.5px;top:1287.18px;font-size:24px;color:#ebebeb">Balance</div>
<div class="t" style="left:92.5px;top:1327.18px;font-size:24px;color:#ebebeb">Binaural Panner</div>
<div class="a" style="left:498px;top:68px;width:212px;height:1602px;border-radius:12px;background:linear-gradient(#33373e 0px,#35383d 180px,#363738 360px,#363636 560px,#353535 1000px,#323232 1602px);box-shadow:0 0 0 1px #000,inset 0 0 0 1.5px #5d6065,0 14px 40px rgba(0,0,0,.4)"></div>
<div class="a" style="left:508px;top:78px;width:192px;height:40px;border-radius:8px;background:#3c73cc"></div>
<div class="t" style="left:518.5px;top:88.71px;font-size:23.5px;color:#ffffff">Bus 1</div>
<div class="t" style="left:518.5px;top:128.71px;font-size:23.5px;color:#e9e9e9">Bus 2</div>
<div class="t" style="left:518.5px;top:168.71px;font-size:23.5px;color:#e9e9e9">Bus 3</div>
<div class="t" style="left:518.5px;top:208.71px;font-size:23.5px;color:#e9e9e9">Bus 4</div>
<div class="t" style="left:518.5px;top:248.71px;font-size:23.5px;color:#e9e9e9">Bus 5</div>
<div class="t" style="left:518.5px;top:288.71px;font-size:23.5px;color:#e9e9e9">Bus 6</div>
<div class="t" style="left:518.5px;top:328.71px;font-size:23.5px;color:#e9e9e9">Bus 7</div>
<div class="t" style="left:518.5px;top:368.71px;font-size:23.5px;color:#e9e9e9">Bus 8</div>
<div class="t" style="left:518.5px;top:408.71px;font-size:23.5px;color:#e9e9e9">Bus 9</div>
<div class="t" style="left:518.5px;top:448.71px;font-size:23.5px;color:#e9e9e9">Bus 10</div>
<div class="t" style="left:518.5px;top:488.71px;font-size:23.5px;color:#e9e9e9">Bus 11</div>
<div class="t" style="left:518.5px;top:528.71px;font-size:23.5px;color:#e9e9e9">Bus 12</div>
<div class="t" style="left:518.5px;top:568.71px;font-size:23.5px;color:#e9e9e9">Bus 13</div>
<div class="t" style="left:518.5px;top:608.71px;font-size:23.5px;color:#e9e9e9">Bus 14</div>
<div class="t" style="left:518.5px;top:648.71px;font-size:23.5px;color:#e9e9e9">Bus 15</div>
<div class="t" style="left:518.5px;top:688.71px;font-size:23.5px;color:#e9e9e9">Bus 16</div>
<div class="t" style="left:518.5px;top:728.71px;font-size:23.5px;color:#e9e9e9">Bus 17</div>
<div class="t" style="left:518.5px;top:768.71px;font-size:23.5px;color:#e9e9e9">Bus 18</div>
<div class="t" style="left:518.5px;top:808.71px;font-size:23.5px;color:#e9e9e9">Bus 19</div>
<div class="t" style="left:518.5px;top:848.71px;font-size:23.5px;color:#e9e9e9">Bus 20</div>
<div class="t" style="left:518.5px;top:888.71px;font-size:23.5px;color:#e9e9e9">Bus 21</div>
<div class="t" style="left:518.5px;top:928.71px;font-size:23.5px;color:#e9e9e9">Bus 22</div>
<div class="t" style="left:518.5px;top:968.71px;font-size:23.5px;color:#e9e9e9">Bus 23</div>
<div class="t" style="left:518.5px;top:1008.71px;font-size:23.5px;color:#e9e9e9">Bus 24</div>
<div class="t" style="left:518.5px;top:1048.71px;font-size:23.5px;color:#e9e9e9">Bus 25</div>
<div class="t" style="left:518.5px;top:1088.71px;font-size:23.5px;color:#e9e9e9">Bus 26</div>
<div class="t" style="left:518.5px;top:1128.71px;font-size:23.5px;color:#e9e9e9">Bus 27</div>
<div class="t" style="left:518.5px;top:1168.71px;font-size:23.5px;color:#e9e9e9">Bus 28</div>
<div class="t" style="left:518.5px;top:1208.71px;font-size:23.5px;color:#e9e9e9">Bus 29</div>
<div class="t" style="left:518.5px;top:1248.71px;font-size:23.5px;color:#e9e9e9">Bus 30</div>
<div class="t" style="left:518.5px;top:1288.71px;font-size:23.5px;color:#e9e9e9">Bus 31</div>
<div class="t" style="left:518.5px;top:1328.71px;font-size:23.5px;color:#e9e9e9">Bus 32</div>
<div class="a" style="left:518px;top:1368px;width:172px;height:2px;background:#4e4e4e"></div>
<div class="t" style="left:518.5px;top:1390.41px;font-size:23.5px;color:#e9e9e9;word-spacing:2px">33 - 64</div>
<svg style="left:670px;top:1392.3px" width="18" height="20"><path d="M5 2.5L12.5 10L5 17.5" fill="none" stroke="#e6e6e6" stroke-width="2.5" stroke-linecap="round" stroke-linejoin="round"/></svg>
<div class="t" style="left:518.5px;top:1430.41px;font-size:23.5px;color:#e9e9e9;word-spacing:2px">65 - 96</div>
<svg style="left:670px;top:1432.3px" width="18" height="20"><path d="M5 2.5L12.5 10L5 17.5" fill="none" stroke="#e6e6e6" stroke-width="2.5" stroke-linecap="round" stroke-linejoin="round"/></svg>
<div class="t" style="left:518.5px;top:1470.41px;font-size:23.5px;color:#e9e9e9;word-spacing:2px">97 - 128</div>
<svg style="left:670px;top:1472.3px" width="18" height="20"><path d="M5 2.5L12.5 10L5 17.5" fill="none" stroke="#e6e6e6" stroke-width="2.5" stroke-linecap="round" stroke-linejoin="round"/></svg>
<div class="t" style="left:518.5px;top:1510.41px;font-size:23.5px;color:#e9e9e9;word-spacing:2px">129 - 160</div>
<svg style="left:670px;top:1512.3px" width="18" height="20"><path d="M5 2.5L12.5 10L5 17.5" fill="none" stroke="#e6e6e6" stroke-width="2.5" stroke-linecap="round" stroke-linejoin="round"/></svg>
<div class="t" style="left:518.5px;top:1550.41px;font-size:23.5px;color:#e9e9e9;word-spacing:2px">161 - 192</div>
<svg style="left:670px;top:1552.3px" width="18" height="20"><path d="M5 2.5L12.5 10L5 17.5" fill="none" stroke="#e6e6e6" stroke-width="2.5" stroke-linecap="round" stroke-linejoin="round"/></svg>
<div class="t" style="left:518.5px;top:1590.41px;font-size:23.5px;color:#e9e9e9;word-spacing:2px">193 - 224</div>
<svg style="left:670px;top:1592.3px" width="18" height="20"><path d="M5 2.5L12.5 10L5 17.5" fill="none" stroke="#e6e6e6" stroke-width="2.5" stroke-linecap="round" stroke-linejoin="round"/></svg>
<div class="t" style="left:518.5px;top:1630.41px;font-size:23.5px;color:#e9e9e9;word-spacing:2px">225 - 256</div>
<svg style="left:670px;top:1632.3px" width="18" height="20"><path d="M5 2.5L12.5 10L5 17.5" fill="none" stroke="#e6e6e6" stroke-width="2.5" stroke-linecap="round" stroke-linejoin="round"/></svg>
</div></body></html>
